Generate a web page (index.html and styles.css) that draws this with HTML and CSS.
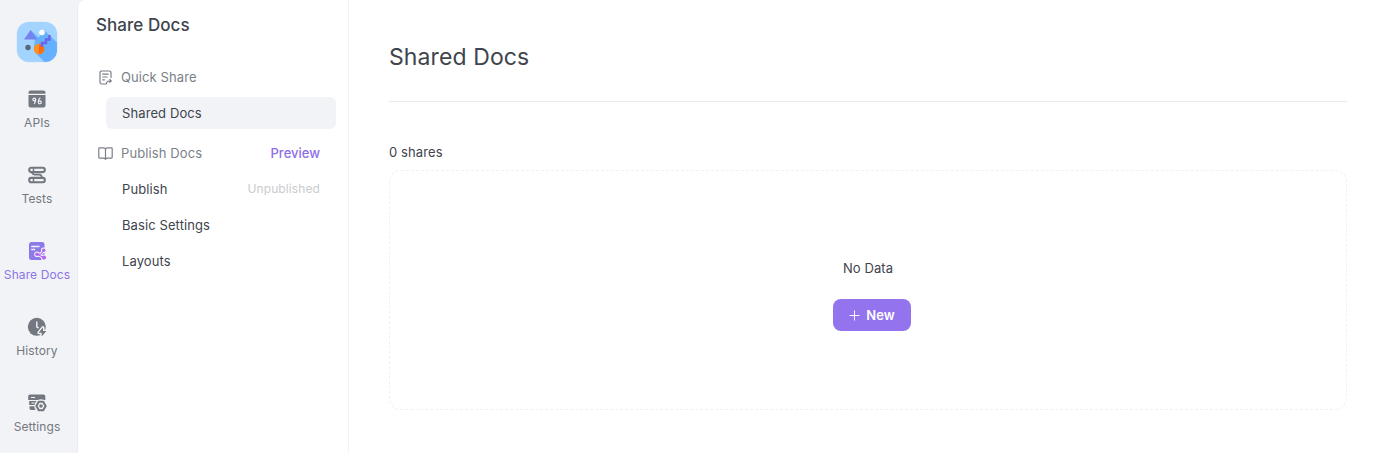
FILE: index.html
```html
<!DOCTYPE html>
<html lang="en">
<head>
<meta charset="utf-8">
<title>Share Docs</title>
<link rel="stylesheet" href="styles.css">
</head>
<body>
<div class="app">
  <nav class="rail">
    <svg class="logo" width="42" height="42" viewBox="0 0 42 42">
      <defs><clipPath id="tile"><rect x="1" y="1" width="40" height="40" rx="12"/></clipPath></defs>
      <rect class="logo-edge" x=".5" y=".5" width="41" height="41" rx="12.5"/>
      <g clip-path="url(#tile)">
        <path fill="#a3d3ff" d="M0 0h42v42H0z"/>
        <path fill="#65b1ff" d="M14.500 9l8 7.500 6-7L42 22.500V42H29.500L19 31.500 18 25l1-6z"/>
        <path fill="#7583ee" d="M14.500 9L21 18.500H8z"/>
        <circle cx="26" cy="11.500" r="2.800" fill="#fff"/>
        <circle cx="12" cy="26.500" r="2.700" fill="#596579"/>
        <circle cx="23" cy="28" r="5.200" fill="#ff9020"/>
        <path fill="#ff6b0a" d="M23 22.800a5.200 5.200 0 0 1 0 10.400z"/>
        <path d="M26 26v-4h4v-3.500h3.500V14" fill="none" stroke="#6b63e8" stroke-width="2.400"/>
      </g>
    </svg>
    <a class="rail-item">
      <svg width="20" height="20" viewBox="0 0 20 20" fill="currentColor">
        <path d="M3.500 1.500h13a2 2 0 0 1 2 2v1.300h-17V3.500a2 2 0 0 1 2-2z"/>
        <path d="M1.500 6h17v10.500a2 2 0 0 1-2 2h-13a2 2 0 0 1-2-2z"/>
        <g fill="none" stroke="#f2f3f7" stroke-width="1.200"><circle cx="7.300" cy="10.500" r="1.400"/><path d="M8.700 10.500c0 2-.5 3.200-1.600 4.300M13.300 8.800c-1.500 1-2 2.400-2 4"/><circle cx="12.800" cy="13.300" r="1.500"/></g>
      </svg><span>APIs</span>
    </a>
    <a class="rail-item">
      <svg width="20" height="20" viewBox="0 0 20 20" fill="none" stroke="currentColor" stroke-width="2.100">
        <rect x="2.200" y="2.700" width="15.600" height="4.400" rx="2"/><rect x="2.200" y="12.900" width="15.600" height="4.400" rx="2"/>
        <path d="M6.500 3v4M6.500 13v4" stroke-width="1.500"/><path d="M5 7q.3 2.400 2.500 2.700h5q2.300.4 2.500 3" stroke-width="1.700"/>
      </svg><span>Tests</span>
    </a>
    <a class="rail-item active">
      <svg width="20" height="20" viewBox="0 0 20 20">
        <rect x="2" y="1" width="15.500" height="18" rx="2.500" fill="#8e79e8"/>
        <path d="M4.200 5.500h8.300M4.200 8.500h4" stroke="#f2f3f7" stroke-width="1.300"/>
        <g stroke="#f2f3f7" fill="#f2f3f7" stroke-width="3"><path d="M16.700 9.500l-3 3.800H10l6.700 3.200" fill="none"/><circle cx="16.700" cy="9.200" r="1.300"/><circle cx="10" cy="13.300" r="1.300"/><circle cx="17" cy="16.600" r="1.600"/></g>
        <g fill="#b565f2"><path d="M16.700 9.500l-3 3.800H10l6.700 3.200" fill="none" stroke="#b565f2" stroke-width="1.100"/><circle cx="16.700" cy="9.200" r="1.700"/><circle cx="10" cy="13.300" r="1.800"/><circle cx="17" cy="16.600" r="2.100"/></g>
      </svg><span>Share Docs</span>
    </a>
    <a class="rail-item">
      <svg width="20" height="20" viewBox="0 0 20 20">
        <circle cx="9.800" cy="9.800" r="9" fill="currentColor"/>
        <path d="M9.800 4.500v5.300l1.800 1.300" fill="none" stroke="#f2f3f7" stroke-width="1.400"/>
        <path d="M16 10.500l-4.200 5.200h3v3.500l4.200-5h-3z" fill="currentColor" stroke="#f2f3f7" stroke-width="3" stroke-linejoin="round"/>
        <path d="M16 10.300l-4.500 5.400h3.200v3.800l4.700-5.500H16z" fill="currentColor"/>
      </svg><span>History</span>
    </a>
    <a class="rail-item">
      <svg width="20" height="20" viewBox="0 0 20 20">
        <path d="M3 1.500h13.500a1.800 1.800 0 0 1 1.800 1.800V7H1.200V3.300A1.800 1.800 0 0 1 3 1.500zM2.200 8h12v4h-12zM2.500 13.200H10V17H4a1.800 1.800 0 0 1-1.500-1.800z" fill="currentColor"/>
        <path d="M4 4.500h4M4.500 10h3" stroke="#f2f3f7" stroke-width="1.200"/>
        <circle cx="14" cy="13" r="6.700" fill="#f2f3f7"/>
        <path d="M11.800 8.700h4.400l2.400 4.300-2.400 4.300h-4.400L9.400 13z" fill="none" stroke="currentColor" stroke-width="2.100" stroke-linejoin="round"/>
        <circle cx="14" cy="13" r="1.800" fill="currentColor"/>
      </svg><span>Settings</span>
    </a>
  </nav>
  <aside class="panel">
    <h2>Share Docs</h2>
    <div class="group">
      <svg width="15" height="15" viewBox="0 0 15 15" fill="none" stroke="currentColor" stroke-width="1.200" stroke-linecap="round" stroke-linejoin="round">
        <path d="M13 7.500V2.700A1.700 1.700 0 0 0 11.300 1H3.700A1.700 1.700 0 0 0 2 2.700v9.600A1.700 1.700 0 0 0 3.700 14h4.500M4.700 4.200h5.600M4.700 7h4.500M4.700 9.800h1.800M8.500 13.500c.2-2 .9-2.700 4.500-2.700M11.800 9.300l1.500 1.500-1.500 1.500"/>
      </svg>
      <span>Quick Share</span>
    </div>
    <a class="entry selected">Shared Docs</a>
    <div class="group second">
      <svg width="15" height="15" viewBox="0 0 15 15" fill="none" stroke="currentColor" stroke-width="1.200" stroke-linecap="round" stroke-linejoin="round">
        <path d="M7.500 3.500C7.500 2.300 6.500 1.800 5.500 1.800H1.600a.8.800 0 0 0-.8.800v8.700c0 .5.300.8.800.8h4.200c.9 0 1.700.6 1.700 1.400 0-.8.800-1.400 1.700-1.400h4.200c.5 0 .8-.3.800-.8V2.600a.8.800 0 0 0-.8-.8H9.500c-1 0-2 .5-2 1.700zv9.800"/>
      </svg>
      <span>Publish Docs</span><a class="preview">Preview</a>
    </div>
    <a class="entry">Publish<span class="status">Unpublished</span></a>
    <a class="entry">Basic Settings</a>
    <a class="entry">Layouts</a>
  </aside>
  <main class="content">
    <h1>Shared Docs</h1>
    <p class="count">0 shares</p>
    <section class="empty">
      <p>No Data</p>
      <button class="new"><svg width="11" height="11" viewBox="0 0 11 11"><path d="M5.500.5v10M.5 5.500h10" stroke="#fff" stroke-width="1"/></svg>New</button>
    </section>
  </main>
</div>
</body>
</html>
```
FILE: styles.css
```css
* { box-sizing: border-box; }
body { margin: 0; background: #f2f3f7; font: 13px/20px Inter, sans-serif; letter-spacing: .1px; color: #40444d; }
h1, h2, p { margin: 0; }
.app { display: flex; height: 453px; overflow: hidden; }
.rail { width: 77px; flex: none; padding: 21px 3px 0 0; display: flex; flex-direction: column; align-items: center; color: #737780; }
.logo { flex: none; margin-bottom: 26px; }
.logo-edge { fill: #e1e8f2; }
.rail-item { height: 76px; flex: none; display: flex; flex-direction: column; align-items: center; gap: 4px; font-size: 12px; white-space: nowrap; }
.rail-item svg { flex: none; }
.rail-item.active { color: #8b75e7; }
.panel { width: 272px; flex: none; background: #fff; border-left: 1px solid #ebecf1; border-right: 1px solid #f2f3f6; border-top-left-radius: 8px; padding: 13px 12px 0 18px; }
.panel h2 { font-size: 17px; line-height: 24px; font-weight: 500; letter-spacing: .05px; margin-bottom: 24px; }
.group { height: 32px; display: flex; align-items: center; gap: 8px; padding: 0 16px 0 2px; color: #7b7f87; margin-bottom: 4px; }
.group.second { margin-top: 8px; }
.preview { margin-left: auto; color: #8e6ee8; font-weight: 500; letter-spacing: 0; }
.entry { height: 32px; display: flex; align-items: center; justify-content: space-between; margin: 0 0 4px 10px; padding: 0 16px; border-radius: 6px; }
.selected { background: #f2f3f7; }
.status { font-size: 12px; color: #c9cbce; }
.content { flex: 1; background: #fff; padding: 0 37px 0 40px; }
.content h1 { height: 102px; padding-top: 41px; border-bottom: 1px solid #e9e9eb; font-size: 23px; line-height: 32px; font-weight: 400; }
.count { margin: 40px 0 8px; }
.empty { height: 240px; border: 1px dashed #f1f1f3; border-radius: 12px; display: flex; flex-direction: column; align-items: center; padding-top: 87px; }
.new { width: 78px; height: 32px; margin: 21px 0 0 8px; border: 0; border-radius: 8px; background: #9373ee; color: #fff; display: flex; align-items: center; justify-content: center; gap: 6px; font: 600 13px/20px Inter, sans-serif; padding: 0; }
```
